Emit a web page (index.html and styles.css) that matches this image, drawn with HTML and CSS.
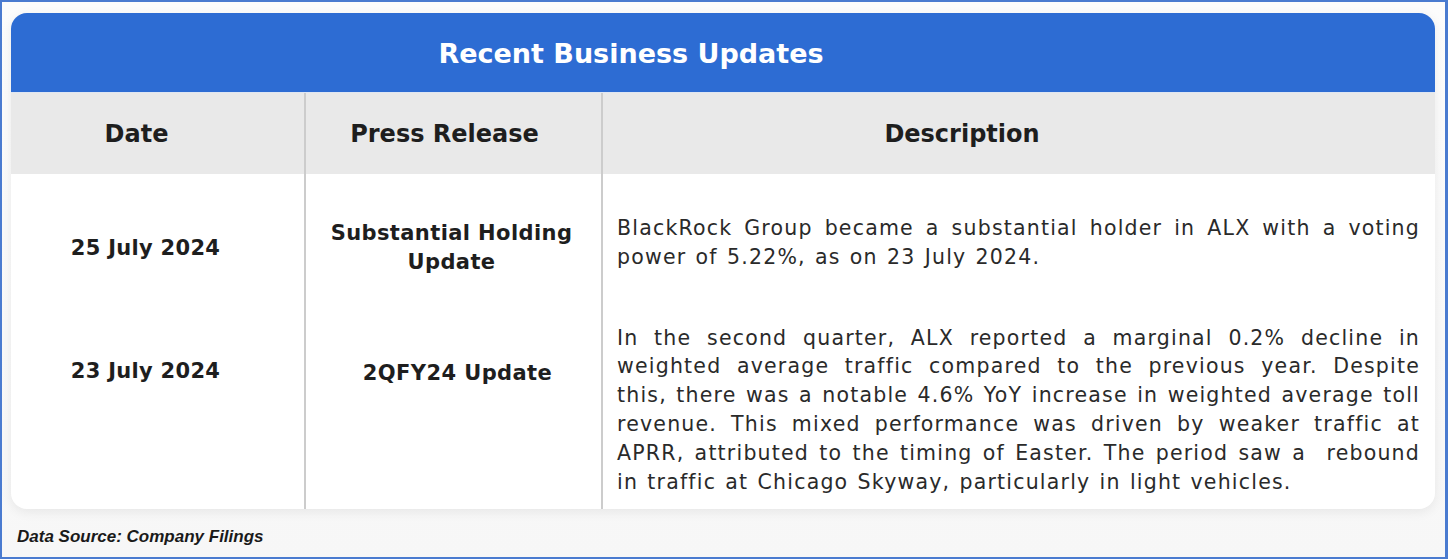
FILE: index.html
```html
<!DOCTYPE html>
<html>
<head>
<meta charset="utf-8">
<link rel="stylesheet" href="styles.css">
</head>
<body>
<div class="frame">
  <div class="card">
    <div class="title">Recent Business Updates</div>
    <div class="table">
      <div class="th c1">Date</div>
      <div class="th c2">Press Release</div>
      <div class="th c3">Description</div>

      <div class="td c1 r1 date">25 July 2024</div>
      <div class="td c2 r1 pr">Substantial Holding<br>Update</div>
      <div class="td c3 r1 desc"><p>BlackRock Group became a substantial holder in ALX with a voting power of 5.22%, as on 23 July 2024.</p></div>

      <div class="td c1 r2 date">23 July 2024</div>
      <div class="td c2 r2 pr pr2">2QFY24 Update</div>
      <div class="td c3 r2 desc"><p>In the second quarter, ALX reported a marginal 0.2% decline in weighted average traffic compared to the previous year. Despite this, there was a notable 4.6% YoY increase in weighted average toll revenue. This mixed performance was driven by weaker traffic at APRR, attributed to the timing of Easter. The period saw a &nbsp;rebound in traffic at Chicago Skyway, particularly in light vehicles.</p></div>
    </div>
  </div>
  <div class="source">Data Source: Company Filings</div>
</div>
</body>
</html>
```

FILE: styles.css
```css
html, body {
  margin: 0;
  padding: 0;
}
body {
  width: 1448px;
  height: 559px;
  overflow: hidden;
  background: #ffffff;
  font-family: "DejaVu Sans", "Noto Sans", sans-serif;
  color: #222222;
}
.frame {
  box-sizing: border-box;
  width: 1448px;
  height: 559px;
  border: 2px solid #4a7bd0;
  border-right-width: 3px;
  background: linear-gradient(#fcfcfc, #f7f7f7);
  padding: 11px 11px 0 9px;
}
.card {
  width: 1424px;
  height: 496px;
  background: #ffffff;
  border-radius: 16px;
  overflow: hidden;
  box-shadow: 0 3px 12px rgba(0, 0, 0, 0.07);
  display: flex;
  flex-direction: column;
}
.title {
  height: 80px;
  flex: none;
  box-sizing: border-box;
  background: #2d6cd3;
  color: #ffffff;
  font-weight: bold;
  font-size: 27px;
  display: flex;
  align-items: center;
  justify-content: center;
  padding-right: 184px;
  padding-top: 1px;
  border-bottom: 1px solid #dfe6f2;
}
.table {
  flex: 1;
  display: grid;
  grid-template-columns: 293px 297px 834px;
  grid-template-rows: 81px 137px 1fr;
}
.th, .td {
  display: flex;
  align-items: center;
  justify-content: center;
  text-align: center;
}
.th {
  background: #e9e9e9;
  font-weight: bold;
  font-size: 24px;
  color: #1e1e1e;
}
.c2, .c3 {
  border-left: 2px solid #cccccc;
}
.th.c1 { padding-right: 42px; }
.th.c2 { padding-right: 18px; }
.th.c3 { padding-right: 114px; }
.date {
  font-weight: bold;
  font-size: 21px;
  letter-spacing: 0.3px;
  color: #1e1e1e;
  padding-right: 24px;
}
.r1.date { padding-top: 10px; }
.r2.date, .r2.pr {
  align-items: flex-start;
  padding-top: 48px;
}
.pr {
  font-weight: bold;
  font-size: 21px;
  letter-spacing: 0.4px;
  line-height: 29px;
  color: #1e1e1e;
  padding-right: 4px;
}
.r1.pr { padding-top: 10px; }
.r2.pr { padding-left: 8px; padding-right: 0; }
.desc {
  justify-content: stretch;
  text-align: justify;
  padding: 0 15px 0 14px;
}
.desc p {
  margin: 0;
  width: 100%;
  font-size: 20.5px;
  letter-spacing: 1.2px;
  word-spacing: 1.5px;
  line-height: 28.8px;
  color: #2a2a2a;
}
.source {
  font-family: "Liberation Sans", Arial, sans-serif;
  font-weight: bold;
  font-style: italic;
  font-size: 17px;
  color: #1a1a1a;
  padding: 18px 0 0 6px;
}
```
